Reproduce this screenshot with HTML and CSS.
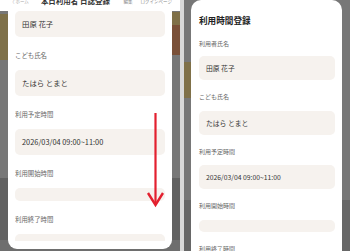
FILE: index.html
```html
<!DOCTYPE html>
<html lang="ja">
<head>
    <meta charset="UTF-8">
    <meta name="viewport" content="width=device-width, initial-scale=1.0">
    <title>利用時間登録</title>
    <link rel="stylesheet" href="styles.css">
</head>
<body>
    <div class="screens">
        <!-- scrolled state -->
        <section class="phone phone-left">
            <div class="topbar">
                <span class="topbar-back">〈 ホーム</span>
                <span class="topbar-title">本日利用者 日誌登録</span>
                <span class="topbar-link">編集</span>
                <span class="topbar-link">ログインページ</span>
            </div>
            <div class="sheet sheet-scrolled">
                <div class="sheet-body">
                    <div class="field-value">田原 花子</div>
                    <div class="field">
                        <label>こども氏名</label>
                        <div class="field-value">たはら とまと</div>
                    </div>
                    <div class="field">
                        <label>利用予定時間</label>
                        <div class="field-value">2026/03/04 09:00~11:00</div>
                    </div>
                    <div class="field">
                        <label>利用開始時間</label>
                        <div class="field-value empty"></div>
                    </div>
                    <div class="field">
                        <label>利用終了時間</label>
                        <div class="field-value empty"></div>
                    </div>
                </div>
            </div>
            <svg class="scroll-arrow" width="18" height="96" viewBox="0 0 18 96">
                <path d="M9.5 1 V92" stroke="#e3202f" stroke-width="2.2" fill="none"/>
                <path d="M2 81 L9.5 93 L17 81" stroke="#e3202f" stroke-width="2.4" fill="none" stroke-linejoin="miter"/>
            </svg>
        </section>

        <div class="divider"></div>

        <!-- initial state -->
        <section class="phone phone-right">
            <div class="hint"><span>・本日の利用者の利用時間を登録してください</span></div>
            <div class="sheet">
                <h2 class="sheet-title">利用時間登録</h2>
                <div class="field first">
                    <label>利用者氏名</label>
                    <div class="field-value">田原 花子</div>
                </div>
                <div class="field">
                    <label>こども氏名</label>
                    <div class="field-value">たはら とまと</div>
                </div>
                <div class="field">
                    <label>利用予定時間</label>
                    <div class="field-value">2026/03/04 09:00~11:00</div>
                </div>
                <div class="field">
                    <label>利用開始時間</label>
                    <div class="field-value empty"></div>
                </div>
                <div class="field">
                    <label>利用終了時間</label>
                    <div class="field-value empty"></div>
                </div>
            </div>
        </section>
    </div>
</body>
</html>
```

FILE: styles.css
```css
html, body {
    margin: 0;
    padding: 0;
}
body {
    width: 350px;
    height: 251px;
    overflow: hidden;
    background-color: #777;
    font-family: "Noto Sans CJK JP", "Noto Sans", sans-serif;
    color: #333;
}
.screens {
    display: flex;
    height: 251px;
}
.phone {
    position: relative;
    display: flex;
    flex-direction: column;
    overflow: hidden;
    height: 251px;
}
.divider {
    width: 4px;
    background-color: #d9d9d9;
}

/* left phone - dimmed page behind the sheet */
.phone-left {
    width: 180px;
    background:
        linear-gradient(#7e7049, #7e7049) 0 14px / 8px 46px no-repeat,
        linear-gradient(#7f7048, #7f7048) 172px 12px / 8px 13px no-repeat,
        linear-gradient(#7a5038, #7a5038) 172px 25px / 8px 30px no-repeat,
        linear-gradient(#777 0, #777 178px, #616161 178px, #616161 240px, #6e6e6e 240px);
}
.topbar {
    height: 11px;
    background-color: #fff;
    display: flex;
    align-items: flex-start;
    gap: 8px;
    padding: 0 8px 0 10px;
    overflow: hidden;
}
.topbar span {
    margin-top: -3px;
    line-height: 8px;
    white-space: nowrap;
}
.topbar-back {
    font-size: 4.5px;
    color: #aaa;
    margin-right: 4px;
}
.topbar-title {
    font-size: 7.5px;
    font-weight: 700;
    color: #333;
    flex: 1;
}
.topbar-link {
    font-size: 4.5px;
    color: #888;
}

.sheet {
    background-color: #fff;
    box-sizing: border-box;
}
.sheet-scrolled {
    margin: 0 8px;
    height: 238px;
    padding: 0 7px 8px;
    border-radius: 0 0 9px 9px;
    display: flex;
    flex-direction: column;
}
.sheet-body {
    flex: 1;
    overflow: hidden;
    display: flex;
    flex-direction: column;
    gap: 14px;
}
.field {
    display: flex;
    flex-direction: column;
}
.field label {
    font-size: 6.4px;
    line-height: 10px;
    color: #666;
    margin-bottom: 9px;
}
.field-value {
    flex-shrink: 0;
    height: 26px;
    line-height: 26px;
    padding: 0 7px;
    border-radius: 5px;
    background-color: #f6f2ee;
    font-size: 7.4px;
    color: #333;
    white-space: nowrap;
}
.field-value.empty {
    height: 13px;
}
.scroll-arrow {
    position: absolute;
    left: 146px;
    top: 112px;
}

/* right phone */
.phone-right {
    width: 166px;
    background:
        linear-gradient(#7f7048, #7f7048) 0 62px / 7px 36px no-repeat,
        linear-gradient(#777 0, #777 200px, #676767 200px);
}
.hint {
    height: 3px;
    overflow: hidden;
    padding-left: 10px;
}
.hint span {
    display: block;
    margin-top: -4px;
    font-size: 5px;
    line-height: 7px;
    color: #444;
    white-space: nowrap;
}
.phone-right .sheet {
    margin: 0 8px 0 7px;
    flex: 1;
    padding: 14px 7px 0 8px;
    border-radius: 10px 10px 0 0;
    display: flex;
    flex-direction: column;
    gap: 12px;
}
.sheet-title {
    margin: 0;
    font-size: 8.6px;
    line-height: 12px;
    font-weight: 700;
    color: #222;
}
.phone-right .field label {
    font-size: 6px;
    margin-bottom: 8.5px;
}
.phone-right .field.first {
    margin-top: 1px;
}
.phone-right .field.first label {
    margin-bottom: 7px;
}
.phone-right .field-value {
    height: 24px;
    line-height: 24px;
    font-size: 6.8px;
}
.phone-right .field-value.empty {
    height: 12px;
}
```
